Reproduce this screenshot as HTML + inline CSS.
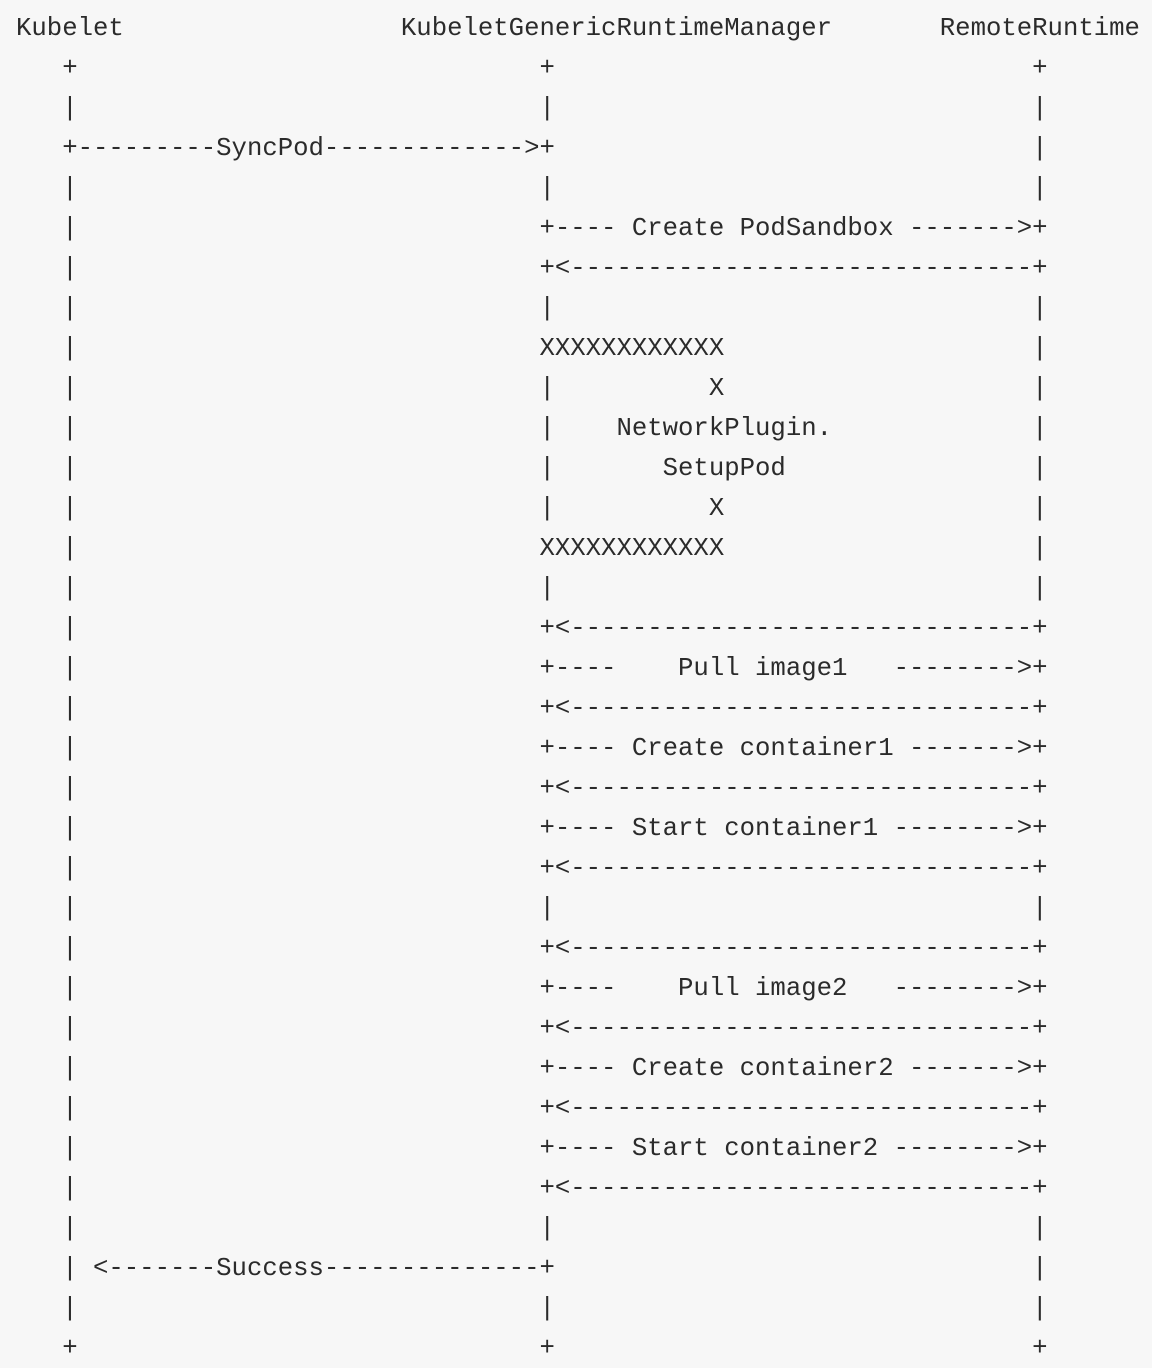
<!DOCTYPE html>
<html><head><meta charset="utf-8"><style>
html,body{margin:0;padding:0;background:#f7f7f7;width:1152px;height:1368px;overflow:hidden}
pre{margin:0;padding:9px 0 0 16px;font-family:"Liberation Mono","DejaVu Sans Mono",monospace;font-size:25.67px;line-height:40px;color:#2b2b2b}
</style></head><body><pre>Kubelet                  KubeletGenericRuntimeManager       RemoteRuntime
   +                              +                               +
   |                              |                               |
   +---------SyncPod------------->+                               |
   |                              |                               |
   |                              +---- Create PodSandbox ------->+
   |                              +&lt;------------------------------+
   |                              |                               |
   |                              XXXXXXXXXXXX                    |
   |                              |          X                    |
   |                              |    NetworkPlugin.             |
   |                              |       SetupPod                |
   |                              |          X                    |
   |                              XXXXXXXXXXXX                    |
   |                              |                               |
   |                              +&lt;------------------------------+
   |                              +----    Pull image1   --------&gt;+
   |                              +&lt;------------------------------+
   |                              +---- Create container1 -------&gt;+
   |                              +&lt;------------------------------+
   |                              +---- Start container1 --------&gt;+
   |                              +&lt;------------------------------+
   |                              |                               |
   |                              +&lt;------------------------------+
   |                              +----    Pull image2   --------&gt;+
   |                              +&lt;------------------------------+
   |                              +---- Create container2 -------&gt;+
   |                              +&lt;------------------------------+
   |                              +---- Start container2 --------&gt;+
   |                              +&lt;------------------------------+
   |                              |                               |
   | &lt;-------Success--------------+                               |
   |                              |                               |
   +                              +                               +</pre></body></html>
